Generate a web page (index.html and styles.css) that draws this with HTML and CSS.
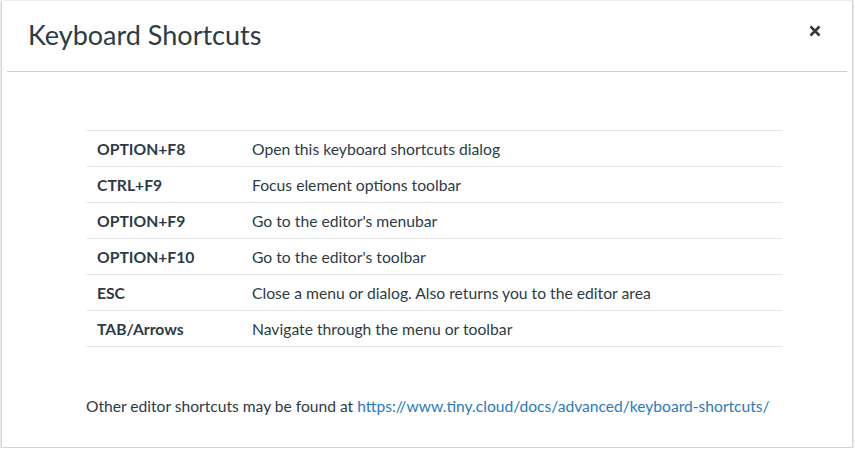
FILE: index.html
```html
<!DOCTYPE html>
<html>
<head>
<meta charset="utf-8">
<link rel="stylesheet" href="styles.css">
</head>
<body>
<div class="dialog">
  <div class="header">
    <h1 class="title">Keyboard Shortcuts</h1>
    <button class="close" aria-label="Close">
      <svg width="12" height="12" viewBox="0 0 12 12"><path d="M1.5 1.5 L10.5 10.5 M10.5 1.5 L1.5 10.5" stroke="#2d3b45" stroke-width="2.6" stroke-linecap="butt"/></svg>
    </button>
  </div>
  <div class="body">
    <table class="shortcuts">
      <tbody>
        <tr><td class="key">OPTION+F8</td><td class="desc">Open this keyboard shortcuts dialog</td></tr>
        <tr><td class="key">CTRL+F9</td><td class="desc">Focus element options toolbar</td></tr>
        <tr><td class="key">OPTION+F9</td><td class="desc">Go to the editor's menubar</td></tr>
        <tr><td class="key">OPTION+F10</td><td class="desc">Go to the editor's toolbar</td></tr>
        <tr><td class="key">ESC</td><td class="desc">Close a menu or dialog. Also returns you to the editor area</td></tr>
        <tr><td class="key">TAB/Arrows</td><td class="desc">Navigate through the menu or toolbar</td></tr>
      </tbody>
    </table>
    <p class="more">Other editor shortcuts may be found at <a href="#" class="link">https://www.tiny.cloud/docs/advanced/keyboard-shortcuts/</a></p>
  </div>
</div>
</body>
</html>
```

FILE: styles.css
```css
html, body {
  margin: 0;
  padding: 0;
  background: #ffffff;
}
body {
  font-family: Lato, "Open Sans", sans-serif;
  color: #2d3b45;
}
.dialog {
  margin-left: 1px;
  width: 852px;
  height: 448px;
  box-sizing: border-box;
  border: 1px solid #d4d4d4;
  border-top-color: #ececec;
  background: #fff;
  box-shadow: 0 1px 2px rgba(0,0,0,0.25);
  display: flex;
  flex-direction: column;
}
.header {
  margin: 0 5px;
  height: 71px;
  box-sizing: border-box;
  border-bottom: 1px solid #c7cdd1;
  display: flex;
  align-items: center;
  justify-content: space-between;
  padding: 0 26px 0 21px;
}
.title {
  margin: 0;
  font-size: 27px;
  font-weight: 400;
  line-height: 1;
  padding-bottom: 4px;
}
.close {
  border: 0;
  background: transparent;
  padding: 0;
  width: 12px;
  height: 12px;
  display: flex;
  margin-bottom: 10px;
}
.body {
  padding: 58px 71px 0 84px;
}
.shortcuts {
  width: 696px;
  border-collapse: collapse;
  font-size: 15.7px;
}
.shortcuts tr {
  border-top: 1px solid #e2e4e6;
  border-bottom: 1px solid #e2e4e6;
}
.shortcuts td {
  height: 35px;
  padding: 0;
  vertical-align: middle;
}
.key {
  width: 155px;
  padding-left: 11px !important;
  font-weight: 700;
}
.more {
  margin: 50px 0 0;
  font-size: 15.6px;
}
.link {
  color: #2b7abc;
  text-decoration: none;
}
```
